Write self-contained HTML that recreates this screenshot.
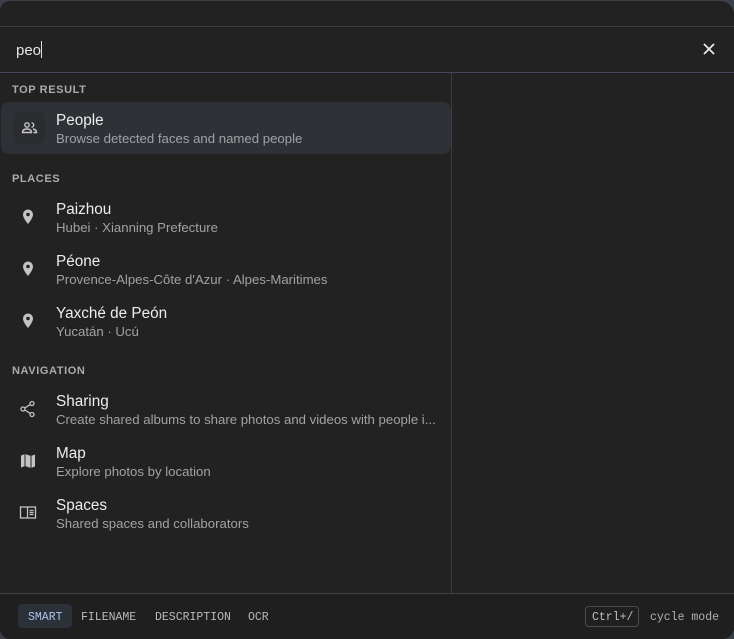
<!DOCTYPE html>
<html><head><meta charset="utf-8"><style>
*{box-sizing:border-box;margin:0;padding:0}
html,body{width:734px;height:639px;background:#3a3f48;overflow:hidden;font-family:"Liberation Sans",sans-serif}
.win{position:absolute;left:0;top:1px;width:734px;height:638px;background:#222222;border-radius:10px 14px 12px 10px;overflow:hidden}
.top{position:absolute;left:0;top:0;width:734px;height:26px;border-bottom:1px solid #3a3c42;background:#212121}
.search{position:absolute;left:0;top:26px;width:734px;height:46px;border-bottom:1px solid #454856}
.search .q{position:absolute;left:16px;top:14px;color:#e6e6e6;font-size:15px}
.search .q i{display:inline-block;width:1px;height:17px;background:#ddd;vertical-align:-3px}
.x{position:absolute;right:18px;top:15px}
.left{position:absolute;left:0;top:72px;width:452px;height:521px;border-right:1px solid #3b3d45}
.foot{position:absolute;left:0;top:592px;width:734px;height:46px;border-top:1px solid #3f424c;background:#1f1f1f}
.h{position:absolute;left:12px;font-size:11px;font-weight:bold;letter-spacing:0.6px;color:#a9abae}
.it{position:absolute;left:0;width:452px;height:52px}
.it.sel{background:#2e3136;border-radius:8px;left:1px;width:450px}
.it .t{position:absolute;left:56px;top:10px;font-size:15.3px;color:#ececec}
.it .s{position:absolute;left:56px;top:29px;font-size:13.2px;color:#a0a2a5;white-space:nowrap}
.it.sel .t,.it.sel .s{left:55px}
.it svg{position:absolute;left:18px;top:16px}
.ib{position:absolute;left:12px;top:10px;width:32px;height:32px;border-radius:6px;background:#2a2c30}
.m{font-family:"Liberation Mono",monospace;font-size:11.5px;color:#b8b8b8;position:absolute;top:17px}
</style></head><body>
<div class="win">
<div class="top"></div>
<div class="search"><div class="q">peo<i></i></div>
<svg class="x" width="14" height="14" viewBox="0 0 14 14"><path d="M2 2L12 12M12 2L2 12" stroke="#e6e6e6" stroke-width="1.8"/></svg></div>
<div class="left">
<div class="h" style="top:11px">TOP RESULT</div>
<div class="it sel" style="top:29px"><div class="ib"></div>
<svg width="20" height="20" viewBox="0 0 20 20" style="left:19px"><circle cx="7" cy="7" r="2.2" fill="none" stroke="#c8c8c8" stroke-width="1.4"/><path d="M2.5 14.5c0-2.5 2-3.5 4.5-3.5s4.5 1 4.5 3.5z" fill="none" stroke="#c8c8c8" stroke-width="1.4"/><path d="M11.5 4.8a2.2 2.2 0 010 4.4M13 11c2 .3 3.5 1.3 3.5 3.5h-3" fill="none" stroke="#c8c8c8" stroke-width="1.4"/></svg>
<div class="t">People</div><div class="s">Browse detected faces and named people</div></div>
<div class="h" style="top:100px">PLACES</div>
<div class="it" style="top:118px"><svg width="20" height="20" viewBox="0 0 20 20"><path d="M10 2.5a5 5 0 00-5 5c0 3.8 5 9.5 5 9.5s5-5.7 5-9.5a5 5 0 00-5-5zm0 6.8a1.8 1.8 0 110-3.6 1.8 1.8 0 010 3.6z" fill="#c4c4c4"/></svg><div class="t">Paizhou</div><div class="s">Hubei · Xianning Prefecture</div></div>
<div class="it" style="top:170px"><svg width="20" height="20" viewBox="0 0 20 20"><path d="M10 2.5a5 5 0 00-5 5c0 3.8 5 9.5 5 9.5s5-5.7 5-9.5a5 5 0 00-5-5zm0 6.8a1.8 1.8 0 110-3.6 1.8 1.8 0 010 3.6z" fill="#c4c4c4"/></svg><div class="t">Péone</div><div class="s">Provence-Alpes-Côte d'Azur · Alpes-Maritimes</div></div>
<div class="it" style="top:222px"><svg width="20" height="20" viewBox="0 0 20 20"><path d="M10 2.5a5 5 0 00-5 5c0 3.8 5 9.5 5 9.5s5-5.7 5-9.5a5 5 0 00-5-5zm0 6.8a1.8 1.8 0 110-3.6 1.8 1.8 0 010 3.6z" fill="#c4c4c4"/></svg><div class="t">Yaxché de Peón</div><div class="s">Yucatán · Ucú</div></div>
<div class="h" style="top:292px">NAVIGATION</div>
<div class="it" style="top:310px"><svg width="20" height="20" viewBox="0 0 20 20"><circle cx="14" cy="4.5" r="2" fill="none" stroke="#c4c4c4" stroke-width="1.3"/><circle cx="5" cy="10" r="2" fill="none" stroke="#c4c4c4" stroke-width="1.3"/><circle cx="14" cy="15.5" r="2" fill="none" stroke="#c4c4c4" stroke-width="1.3"/><path d="M6.8 9l5.4-3.4M6.8 11l5.4 3.4" stroke="#c4c4c4" stroke-width="1.3"/></svg><div class="t">Sharing</div><div class="s">Create shared albums to share photos and videos with people i...</div></div>
<div class="it" style="top:362px"><svg width="20" height="20" viewBox="0 0 20 20"><path d="M3 4.5l4-1.5 6 2 4-1.5v12l-4 1.5-6-2-4 1.5z" fill="#c4c4c4"/><path d="M7 3v12M13 5v12" stroke="#222" stroke-width="1"/></svg><div class="t">Map</div><div class="s">Explore photos by location</div></div>
<div class="it" style="top:414px"><svg width="20" height="20" viewBox="0 0 20 20"><rect x="2.5" y="4" width="15" height="11" fill="none" stroke="#c4c4c4" stroke-width="1.3"/><path d="M9.5 4v11M11.5 7.5h4M11.5 9.5h4M11.5 11.5h4" stroke="#c4c4c4" stroke-width="1.2"/></svg><div class="t">Spaces</div><div class="s">Shared spaces and collaborators</div></div>
</div>
<div class="foot">
<div style="position:absolute;left:18px;top:10px;width:54px;height:24px;background:#2c3038;border-radius:4px"></div>
<div class="m" style="left:28px;color:#a9c4ee">SMART</div>
<div class="m" style="left:81px">FILENAME</div>
<div class="m" style="left:155px">DESCRIPTION</div>
<div class="m" style="left:248px">OCR</div>
<div style="position:absolute;left:585px;top:12px;width:54px;height:21px;border:1px solid #4a4c52;border-radius:4px"></div>
<div class="m" style="left:592px;color:#c0c0c0">Ctrl+/</div>
<div class="m" style="left:650px;color:#b0b0b0">cycle mode</div>
</div>
</div>
</body></html>
